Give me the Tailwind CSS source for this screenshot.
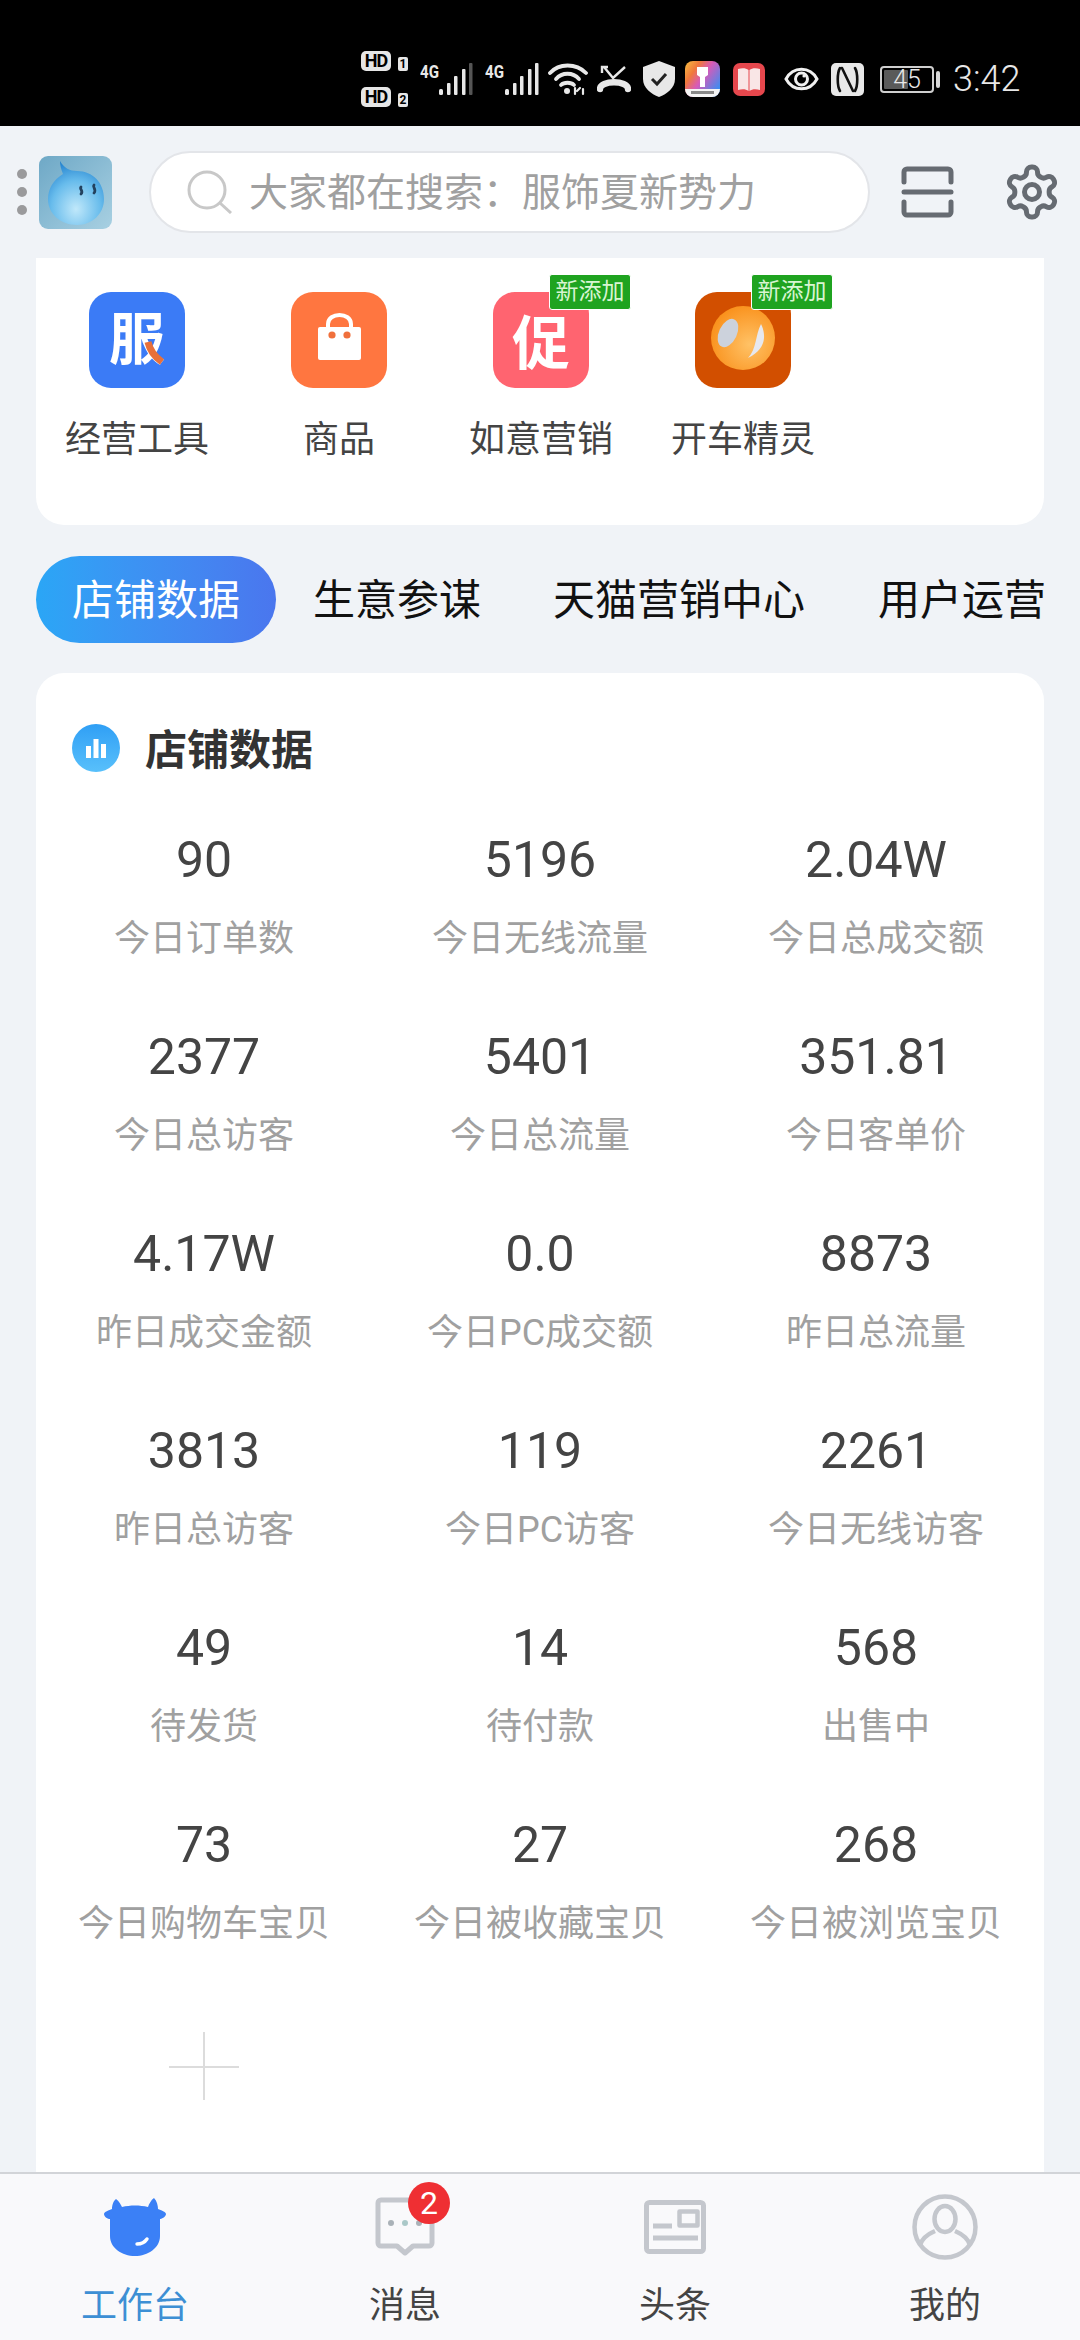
<!DOCTYPE html>
<html lang="zh-CN">
<head>
<meta charset="utf-8">
<script src="https://cdn.jsdelivr.net/npm/@tailwindcss/browser@4"></script>
</head>
<body class="[font-family:Roboto,'Noto_Sans_CJK_SC',sans-serif]">
<div class="w-[1080px] h-[2340px] flex flex-col overflow-hidden bg-[#f0f3f7]">

  <!-- status bar -->
  <div class="h-[126px] shrink-0 bg-black flex items-center pt-[32px] pl-[361px] text-[#e8e8e8]">
    <div class="w-[47px] flex flex-col gap-[16px] shrink-0">
      <div class="flex items-end justify-between">
        <span class="w-[30px] h-[20px] rounded-[5px] bg-[#e6e6e6] text-black text-[18px] leading-[20px] font-bold text-center tracking-tighter">HD</span>
        <span class="w-[10px] h-[14px] rounded-[2px] bg-[#e6e6e6] text-black text-[12px] leading-[14px] font-bold text-center">1</span>
      </div>
      <div class="flex items-end justify-between">
        <span class="w-[30px] h-[20px] rounded-[5px] bg-[#e6e6e6] text-black text-[18px] leading-[20px] font-bold text-center tracking-tighter">HD</span>
        <span class="w-[10px] h-[14px] rounded-[2px] bg-[#e6e6e6] text-black text-[12px] leading-[14px] font-bold text-center">2</span>
      </div>
    </div>
    <svg class="ml-[12px] shrink-0" width="53" height="36" viewBox="0 0 53 36" fill="#e8e8e8">
      <text x="0" y="17" font-size="19" font-weight="700" font-family="Roboto" textLength="19" lengthAdjust="spacingAndGlyphs">4G</text>
      <rect x="19" y="28" width="4" height="6" rx="1.5"/><rect x="27" y="22" width="3.5" height="12" rx="1"/><rect x="34" y="15" width="3.5" height="19" rx="1"/><rect x="42" y="8" width="3.5" height="26" rx="1"/><rect x="49" y="2" width="3.5" height="32" rx="1" fill="#555"/>
    </svg>
    <svg class="ml-[12px] shrink-0" width="54" height="36" viewBox="0 0 54 36" fill="#e8e8e8">
      <text x="0" y="17" font-size="19" font-weight="700" font-family="Roboto" textLength="19" lengthAdjust="spacingAndGlyphs">4G</text>
      <rect x="20" y="28" width="4" height="6" rx="1.5"/><rect x="28" y="22" width="3.5" height="12" rx="1"/><rect x="35" y="15" width="3.5" height="19" rx="1"/><rect x="43" y="8" width="3.5" height="26" rx="1"/><rect x="50" y="2" width="3.5" height="32" rx="1"/>
    </svg>
    <svg class="ml-[9px] shrink-0" width="40" height="34" viewBox="0 0 40 34" fill="none" stroke="#e8e8e8" stroke-width="3.8" stroke-linecap="round">
      <path d="M2 11C11 1 28 1 38 11"/><path d="M8 17C14 10 25 10 31 17"/><path d="M13 23C16 20 23 20 26 23"/>
      <circle cx="19" cy="29" r="3" fill="#e8e8e8" stroke="none"/>
      <path d="M27 32V26M32 26l-3 3M35 27v5" stroke-width="2.2"/>
    </svg>
    <svg class="ml-[9px] shrink-0" width="34" height="28" viewBox="0 0 34 28" fill="none" stroke="#e8e8e8">
      <path d="M7 2L16 13L28 2" stroke-width="2.4"/><path d="M5 8V2H11" stroke-width="2.4"/>
      <path d="M3 24C3 15 31 15 31 24" stroke-width="6.4" stroke-linecap="round"/>
    </svg>
    <svg class="ml-[12px] shrink-0" width="32" height="36" viewBox="0 0 32 36">
      <path d="M16 0L32 6V18C32 27 24 33 16 36C8 33 0 27 0 18V6Z" fill="#e8e8e8"/>
      <path d="M9 18L14 23L23 13" fill="none" stroke="#222" stroke-width="3"/>
    </svg>
    <svg class="ml-[10px] shrink-0" width="35" height="36" viewBox="0 0 35 36">
      <defs><linearGradient id="pa" x1="0" y1="0" x2="1" y2="0.7"><stop offset="0" stop-color="#f8c040"/><stop offset="0.3" stop-color="#f0783c"/><stop offset="0.55" stop-color="#d85ab8"/><stop offset="1" stop-color="#3f8cf0"/></linearGradient></defs>
      <rect width="35" height="36" rx="8" fill="url(#pa)"/>
      <path d="M0 28H35V28A8 8 0 0 1 27 36H8A8 8 0 0 1 0 28Z" fill="#f4f4f4"/>
      <rect x="6" y="30" width="23" height="3" fill="#888"/>
      <path d="M12 6H23V14L20 16V26H15V16L12 14Z" fill="#fff"/>
    </svg>
    <svg class="ml-[13px] shrink-0" width="32" height="33" viewBox="0 0 32 33">
      <rect width="32" height="33" rx="7" fill="#e6474d"/>
      <path d="M5 6C9 5 13 5 15.5 7V28C13 26 9 26 5 27ZM27 6C23 5 19 5 16.5 7V28C19 26 23 26 27 27Z" fill="#f9e6e6"/>
    </svg>
    <svg class="ml-[19px] shrink-0" width="35" height="26" viewBox="0 0 35 26" fill="none" stroke="#f0f0f0">
      <path d="M2 13C9 0 26 0 33 13C26 26 9 26 2 13Z" stroke-width="3"/>
      <circle cx="17.5" cy="13" r="6" stroke-width="3"/>
      <circle cx="20" cy="10" r="1.6" fill="#f0f0f0" stroke="none"/>
    </svg>
    <svg class="ml-[12px] shrink-0" width="33" height="33" viewBox="0 0 33 33">
      <rect width="33" height="33" rx="5" fill="#e8e8e8"/>
      <path d="M9 5C6 10 6 23 9 28M24 5C27 10 27 23 24 28M11 5L22 28" fill="none" stroke="#111" stroke-width="2.6" stroke-linecap="round"/>
    </svg>
    <div class="ml-[16px] relative w-[54px] h-[27px] shrink-0 rounded-[4px] border-2 border-[#cfcfcf] p-[2px]">
      <div class="w-[24px] h-full bg-[#5a5a5a] rounded-[1px]"></div>
      <span class="absolute inset-0 flex items-center justify-center text-[25px] font-light text-[#e8e8e8] leading-none">45</span>
    </div>
    <div class="ml-[2px] w-[4px] h-[17px] rounded-[2px] bg-[#d8d8d8] shrink-0"></div>
    <span class="ml-[13px] text-[36px] leading-none font-light text-[#e8e8e8]">3:42</span>
  </div>

  <!-- header -->
  <div class="h-[132px] shrink-0 flex items-center pl-[17px]">
    <div class="flex flex-col gap-[8px] shrink-0">
      <span class="w-[10px] h-[10px] rounded-full bg-[#9a9a9c]"></span>
      <span class="w-[10px] h-[10px] rounded-full bg-[#9a9a9c]"></span>
      <span class="w-[10px] h-[10px] rounded-full bg-[#9a9a9c]"></span>
    </div>
    <svg class="ml-[12px] shrink-0" width="73" height="73" viewBox="0 0 73 73">
      <defs>
        <linearGradient id="lb" x1="0" y1="0" x2="1" y2="1"><stop offset="0" stop-color="#6ea8c6"/><stop offset="1" stop-color="#a8d0e2"/></linearGradient>
        <radialGradient id="lw" cx="0.5" cy="0.75" r="0.8"><stop offset="0" stop-color="#c0e8fa"/><stop offset="0.55" stop-color="#68bcec"/><stop offset="1" stop-color="#1c7ccc"/></radialGradient>
      </defs>
      <rect width="73" height="73" rx="9" fill="url(#lb)"/>
      <path d="M21 5C25 12 31 15 38 15C54 15 65 27 65 43C65 58 53 69 38 69C22 69 9 58 9 43C9 33 14 24 24 18C22 13 21 9 21 5Z" fill="url(#lw)"/>
      <path d="M42 31C40 33 45 35 42 38M55 29C53 31 58 33 55 37" fill="none" stroke="#23415e" stroke-width="2.8" stroke-linecap="round"/>
    </svg>
    <div class="ml-[37px] w-[721px] h-[82px] shrink-0 rounded-full bg-white border-2 border-[#e3e5e9] flex items-center pl-[36px]">
      <svg class="shrink-0" width="46" height="44" viewBox="0 0 46 44" fill="none" stroke="#c8c8c8" stroke-width="3">
        <circle cx="20" cy="20" r="18"/><path d="M33 33L44 43"/>
      </svg>
      <span class="ml-[16px] pt-[3px] text-[39px] leading-none text-[#a0a0a0] whitespace-nowrap">大家都在搜索：服饰夏新势力</span>
    </div>
    <svg class="ml-[31px] shrink-0" width="53" height="52" viewBox="0 0 53 52" fill="none" stroke="#666b72" stroke-width="5" stroke-linecap="round" stroke-linejoin="round">
      <path d="M3 16V6A3 3 0 0 1 6 3H47A3 3 0 0 1 50 6V16"/><path d="M3 26H50"/><path d="M3 36V46A3 3 0 0 0 6 49H47A3 3 0 0 0 50 46V36"/>
    </svg>
    <svg class="ml-[48px] shrink-0" width="60" height="60" viewBox="0 0 24 24" fill="none" stroke="#666b72" stroke-width="2" stroke-linecap="round" stroke-linejoin="round">
      <path d="M12.22 2h-.44a2 2 0 0 0-2 2v.18a2 2 0 0 1-1 1.73l-.43.25a2 2 0 0 1-2 0l-.15-.08a2 2 0 0 0-2.73.73l-.22.38a2 2 0 0 0 .73 2.73l.15.1a2 2 0 0 1 1 1.72v.51a2 2 0 0 1-1 1.74l-.15.09a2 2 0 0 0-.73 2.73l.22.38a2 2 0 0 0 2.73.73l.15-.08a2 2 0 0 1 2 0l.43.25a2 2 0 0 1 1 1.73V20a2 2 0 0 0 2 2h.44a2 2 0 0 0 2-2v-.18a2 2 0 0 1 1-1.73l.43-.25a2 2 0 0 1 2 0l.15.08a2 2 0 0 0 2.73-.73l.22-.39a2 2 0 0 0-.73-2.73l-.15-.08a2 2 0 0 1-1-1.74v-.5a2 2 0 0 1 1-1.74l.15-.09a2 2 0 0 0 .73-2.73l-.22-.38a2 2 0 0 0-2.73-.73l-.15.08a2 2 0 0 1-2 0l-.43-.25a2 2 0 0 1-1-1.73V4a2 2 0 0 0-2-2z"/>
      <circle cx="12" cy="12" r="3"/>
    </svg>
  </div>

  <!-- tools card -->
  <div class="mx-[36px] h-[267px] shrink-0 bg-white rounded-b-[28px] pt-[34px] grid grid-cols-[repeat(5,202px)]">
    <div class="flex flex-col items-center">
      <div class="relative w-[96px] h-[96px] rounded-[22px] bg-[#3b7bf6] flex items-center justify-center">
        <span class="text-[56px] leading-none font-bold text-white">服</span>
        <svg class="absolute inset-0" width="96" height="96" viewBox="0 0 96 96"><path d="M59 50C61 59 66 65 73 70" fill="none" stroke="#e8703a" stroke-width="7"/></svg>
      </div>
      <span class="mt-[27px] text-[36px] leading-[50px] text-[#444] whitespace-nowrap">经营工具</span>
    </div>
    <div class="flex flex-col items-center">
      <div class="w-[96px] h-[96px] rounded-[22px] bg-[#ff7640]">
        <svg width="96" height="96" viewBox="0 0 96 96">
          <path d="M37 36V32C37 20 60 20 60 32V36" fill="none" stroke="#fff" stroke-width="4"/>
          <rect x="27" y="35" width="43" height="33" rx="2" fill="#fff"/>
          <circle cx="41" cy="43" r="3.6" fill="#f0703c"/><circle cx="56" cy="43" r="3.6" fill="#f0703c"/>
        </svg>
      </div>
      <span class="mt-[27px] text-[36px] leading-[50px] text-[#444] whitespace-nowrap">商品</span>
    </div>
    <div class="flex flex-col items-center">
      <div class="relative w-[96px] h-[96px] rounded-[22px] bg-[#ff6470] flex items-center justify-center">
        <span class="text-[58px] leading-none font-bold text-white pt-[8px]">促</span>
        <span class="absolute -top-[18px] -right-[42px] w-[82px] h-[36px] rounded-[3px] bg-[#1fa320] border border-white text-[23px] leading-[34px] text-center text-[#d9f5d2]">新添加</span>
      </div>
      <span class="mt-[27px] text-[36px] leading-[50px] text-[#444] whitespace-nowrap">如意营销</span>
    </div>
    <div class="flex flex-col items-center">
      <div class="relative w-[96px] h-[96px] rounded-[22px] bg-[#d24f00]">
        <svg width="96" height="96" viewBox="0 0 96 96">
          <defs><radialGradient id="wo" cx="0.6" cy="0.6" r="0.7"><stop offset="0" stop-color="#ffc266"/><stop offset="1" stop-color="#f98c14"/></radialGradient></defs>
          <circle cx="48" cy="46" r="32" fill="url(#wo)"/>
          <ellipse cx="33" cy="41" rx="9" ry="15" transform="rotate(25 33 41)" fill="#ccd2dc"/>
          <path d="M66 32C72 44 70 58 53 66C62 56 60 44 66 32Z" fill="#e6e8ee"/>
        </svg>
        <span class="absolute -top-[18px] -right-[42px] w-[82px] h-[36px] rounded-[3px] bg-[#1fa320] border border-white text-[23px] leading-[34px] text-center text-[#d9f5d2]">新添加</span>
      </div>
      <span class="mt-[27px] text-[36px] leading-[50px] text-[#444] whitespace-nowrap">开车精灵</span>
    </div>
  </div>

  <!-- tabs -->
  <div class="mt-[31px] h-[87px] shrink-0 pl-[36px] flex items-center text-[42px] leading-none text-[#111] whitespace-nowrap">
    <span class="w-[240px] h-[87px] rounded-full bg-linear-to-r from-[#2aa6f6] to-[#4a76ee] text-white flex items-center justify-center pt-[3px]">店铺数据</span>
    <span class="ml-[37px] pt-[3px]">生意参谋</span>
    <span class="ml-[72px] pt-[3px]">天猫营销中心</span>
    <span class="ml-[73px] pt-[3px]">用户运营</span>
  </div>

  <!-- data card -->
  <div class="mt-[30px] mx-[36px] flex-1 min-h-0 bg-white rounded-t-[28px] pt-[51px]">
    <div class="flex items-center pl-[36px] h-[48px]">
      <div class="w-[48px] h-[48px] rounded-full bg-linear-to-b from-[#2f9ff5] to-[#58c0fb] flex items-center justify-center">
        <svg width="24" height="24" viewBox="0 0 24 24" fill="#fff"><rect x="2" y="10" width="5" height="12"/><rect x="9.5" y="3" width="5" height="19"/><rect x="17" y="8" width="5" height="14"/></svg>
      </div>
      <span class="ml-[25px] mt-[6px] text-[42px] leading-none font-bold text-[#333]">店铺数据</span>
    </div>
    <div class="mt-[58px] grid grid-cols-3 gap-y-[63px] text-center">
      <div><div class="text-[50px] leading-[60px] text-[#444]">90</div><div class="mt-[24px] text-[36px] leading-[50px] text-[#a0a0a0]">今日订单数</div></div>
      <div><div class="text-[50px] leading-[60px] text-[#444]">5196</div><div class="mt-[24px] text-[36px] leading-[50px] text-[#a0a0a0]">今日无线流量</div></div>
      <div><div class="text-[50px] leading-[60px] text-[#444]">2.04W</div><div class="mt-[24px] text-[36px] leading-[50px] text-[#a0a0a0]">今日总成交额</div></div>
      <div><div class="text-[50px] leading-[60px] text-[#444]">2377</div><div class="mt-[24px] text-[36px] leading-[50px] text-[#a0a0a0]">今日总访客</div></div>
      <div><div class="text-[50px] leading-[60px] text-[#444]">5401</div><div class="mt-[24px] text-[36px] leading-[50px] text-[#a0a0a0]">今日总流量</div></div>
      <div><div class="text-[50px] leading-[60px] text-[#444]">351.81</div><div class="mt-[24px] text-[36px] leading-[50px] text-[#a0a0a0]">今日客单价</div></div>
      <div><div class="text-[50px] leading-[60px] text-[#444]">4.17W</div><div class="mt-[24px] text-[36px] leading-[50px] text-[#a0a0a0]">昨日成交金额</div></div>
      <div><div class="text-[50px] leading-[60px] text-[#444]">0.0</div><div class="mt-[24px] text-[36px] leading-[50px] text-[#a0a0a0]">今日PC成交额</div></div>
      <div><div class="text-[50px] leading-[60px] text-[#444]">8873</div><div class="mt-[24px] text-[36px] leading-[50px] text-[#a0a0a0]">昨日总流量</div></div>
      <div><div class="text-[50px] leading-[60px] text-[#444]">3813</div><div class="mt-[24px] text-[36px] leading-[50px] text-[#a0a0a0]">昨日总访客</div></div>
      <div><div class="text-[50px] leading-[60px] text-[#444]">119</div><div class="mt-[24px] text-[36px] leading-[50px] text-[#a0a0a0]">今日PC访客</div></div>
      <div><div class="text-[50px] leading-[60px] text-[#444]">2261</div><div class="mt-[24px] text-[36px] leading-[50px] text-[#a0a0a0]">今日无线访客</div></div>
      <div><div class="text-[50px] leading-[60px] text-[#444]">49</div><div class="mt-[24px] text-[36px] leading-[50px] text-[#a0a0a0]">待发货</div></div>
      <div><div class="text-[50px] leading-[60px] text-[#444]">14</div><div class="mt-[24px] text-[36px] leading-[50px] text-[#a0a0a0]">待付款</div></div>
      <div><div class="text-[50px] leading-[60px] text-[#444]">568</div><div class="mt-[24px] text-[36px] leading-[50px] text-[#a0a0a0]">出售中</div></div>
      <div><div class="text-[50px] leading-[60px] text-[#444]">73</div><div class="mt-[24px] text-[36px] leading-[50px] text-[#a0a0a0]">今日购物车宝贝</div></div>
      <div><div class="text-[50px] leading-[60px] text-[#444]">27</div><div class="mt-[24px] text-[36px] leading-[50px] text-[#a0a0a0]">今日被收藏宝贝</div></div>
      <div><div class="text-[50px] leading-[60px] text-[#444]">268</div><div class="mt-[24px] text-[36px] leading-[50px] text-[#a0a0a0]">今日被浏览宝贝</div></div>
    </div>
    <div class="mt-[83px] w-[336px] flex justify-center">
      <svg width="70" height="70" viewBox="0 0 70 70" stroke="#dcdcdc" stroke-width="2"><path d="M35 0V68M0 35H70"/></svg>
    </div>
  </div>

  <!-- bottom nav -->
  <div class="h-[168px] shrink-0 border-t-2 border-[#d2d4d8] bg-[#f9f9fb] grid grid-cols-4 pt-[20px] text-[36px] leading-[50px] text-[#444]">
    <div class="flex flex-col items-center">
      <div class="h-[66px] flex items-center justify-center">
        <svg width="62" height="58" viewBox="0 0 62 58">
          <path d="M12 1C15 3 17 7 18 9C26 7 36 7 44 9C45 6 47 2 50 0C53 3 54 8 54 11C57 12 62 14 62 16C62 19 57 21 56 21V38C56 50 44 58 31 58C18 58 6 50 6 38V21C4 21 0 19 0 16C0 14 5 12 8 11C8 8 9 3 12 1Z" fill="#3b80f6"/>
          <path d="M33 46C37 46 41 44 43 41" fill="none" stroke="#fff" stroke-width="3.4" stroke-linecap="round"/>
        </svg>
      </div>
      <span class="mt-[21px] text-[#3d8fd4]">工作台</span>
    </div>
    <div class="flex flex-col items-center">
      <div class="relative h-[66px] flex items-center justify-center">
        <svg width="60" height="60" viewBox="0 0 60 60" fill="none" stroke="#c4c7cd" stroke-width="5" stroke-linejoin="round">
          <path d="M6 3H54A3 3 0 0 1 57 6V46A3 3 0 0 1 54 49H38L30 56L22 49H6A3 3 0 0 1 3 46V6A3 3 0 0 1 6 3Z"/>
          <circle cx="16" cy="26" r="3" fill="#aab2b8" stroke="none"/><circle cx="30" cy="26" r="3" fill="#aac8c8" stroke="none"/><circle cx="44" cy="26" r="3" fill="#aab2b8" stroke="none"/>
        </svg>
        <span class="absolute -top-[12px] -right-[15px] w-[42px] h-[42px] rounded-full bg-[#ef2f33] text-white text-[32px] leading-[42px] text-center">2</span>
      </div>
      <span class="mt-[21px]">消息</span>
    </div>
    <div class="flex flex-col items-center">
      <div class="h-[66px] flex items-center justify-center">
        <svg width="62" height="54" viewBox="0 0 62 54" fill="none" stroke="#c4c7cd" stroke-width="5" stroke-linejoin="round">
          <rect x="2.5" y="2.5" width="57" height="49" rx="3"/>
          <rect x="35.5" y="11.5" width="18" height="14" stroke-width="4.5"/>
          <path d="M9 26H28M9 38H54" stroke-width="5"/>
        </svg>
      </div>
      <span class="mt-[21px]">头条</span>
    </div>
    <div class="flex flex-col items-center">
      <div class="h-[66px] flex items-center justify-center">
        <svg width="66" height="66" viewBox="0 0 66 66" fill="none" stroke="#c4c7cd" stroke-width="4.5">
          <circle cx="33" cy="33" r="30.5"/>
          <ellipse cx="33" cy="25" rx="10.5" ry="13"/>
          <path d="M23 37C16 40 10 45 8 51M43 37C50 40 56 45 58 51"/>
        </svg>
      </div>
      <span class="mt-[21px]">我的</span>
    </div>
  </div>
</div>
</body>
</html>
